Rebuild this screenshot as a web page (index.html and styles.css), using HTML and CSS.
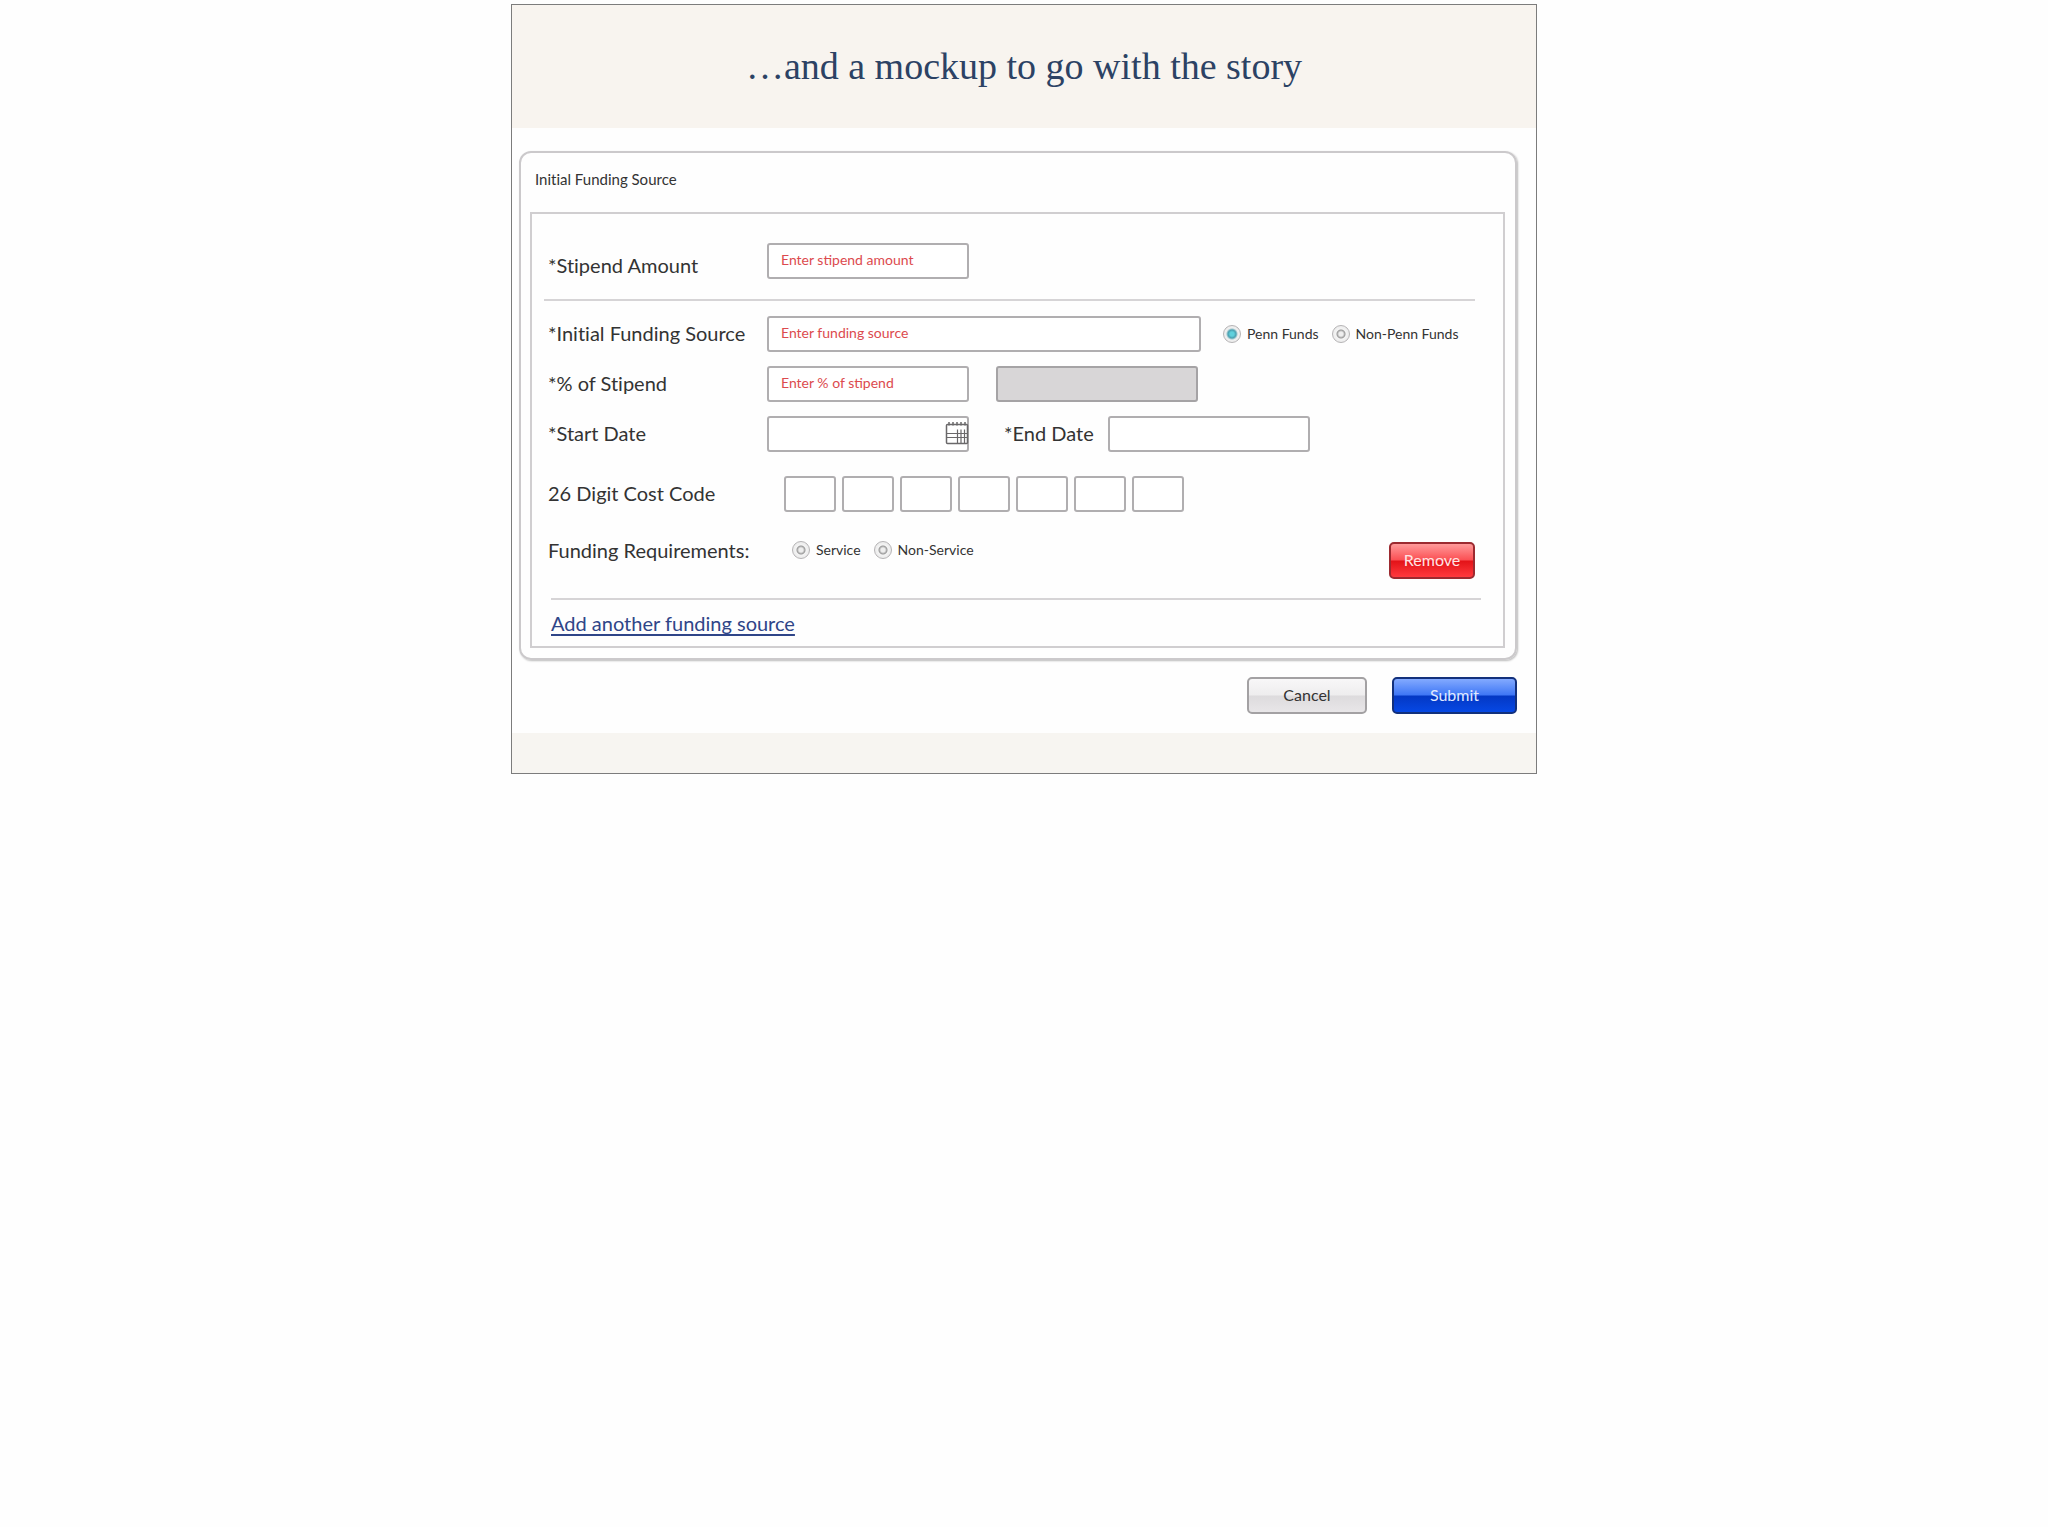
FILE: index.html
```html
<!DOCTYPE html>
<html lang="en">
<head>
    <meta charset="utf-8">
    <title>Initial Funding Source</title>
    <link rel="stylesheet" href="styles.css">
</head>
<body>
    <main class="slide">
        <header class="slide-header">
            <h1>…and a mockup to go with the story</h1>
        </header>

        <form class="funding-form">
            <section class="card">
                <h2>Initial Funding Source</h2>

                <div class="panel">
                    <div class="row row-stipend">
                        <label class="name" for="stipend">*Stipend Amount</label>
                        <input type="text" id="stipend" class="box" placeholder="Enter stipend amount">
                    </div>

                    <hr>

                    <div class="row">
                        <label class="name" for="source">*Initial Funding Source</label>
                        <input type="text" id="source" class="box wide" placeholder="Enter funding source">
                        <div class="options funds">
                            <label><input type="radio" name="funds" checked>Penn Funds</label>
                            <label><input type="radio" name="funds">Non-Penn Funds</label>
                        </div>
                    </div>

                    <div class="row">
                        <label class="name" for="percent">*% of Stipend</label>
                        <input type="text" id="percent" class="box" placeholder="Enter % of stipend">
                        <input type="text" class="box amount" aria-label="Calculated amount" disabled>
                    </div>

                    <div class="row">
                        <label class="name" for="start">*Start Date</label>
                        <div class="date">
                            <input type="text" id="start" class="box">
                            <button type="button" class="calendar" aria-label="Pick a date">
                                <svg viewBox="0 0 24 24" width="24" height="24" fill="none" stroke="#6a686a">
                                    <rect x="1.5" y="3.5" width="21" height="19" rx="1" stroke-width="1.5"/>
                                    <path d="M1 12.5h22M1 16.5h22" stroke-width="1.2"/>
                                    <path d="M12.5 8.5v14M16 8.5v14M19.5 8.5v14" stroke-width="1.2"/>
                                    <path d="M4 1v3.5M8 1v3.5M12 1v3.5M16 1v3.5M20 1v3.5" stroke-width="1.5"/>
                                </svg>
                            </button>
                        </div>
                        <label class="end-name" for="end">*End Date</label>
                        <input type="text" id="end" class="box">
                    </div>

                    <div class="row row-code">
                        <label class="name" for="code1">26 Digit Cost Code</label>
                        <div class="code">
                            <input type="text" id="code1" class="box">
                            <input type="text" class="box" aria-label="Cost code part 2">
                            <input type="text" class="box" aria-label="Cost code part 3">
                            <input type="text" class="box" aria-label="Cost code part 4">
                            <input type="text" class="box" aria-label="Cost code part 5">
                            <input type="text" class="box" aria-label="Cost code part 6">
                            <input type="text" class="box" aria-label="Cost code part 7">
                        </div>
                    </div>

                    <div class="row row-requirements">
                        <span class="name">Funding Requirements:</span>
                        <div class="options service">
                            <label><input type="radio" name="service">Service</label>
                            <label><input type="radio" name="service">Non-Service</label>
                        </div>
                        <button type="button" class="button remove">Remove</button>
                    </div>

                    <hr class="last">

                    <a href="#" class="add">Add another funding source</a>
                </div>
            </section>

            <div class="actions">
                <button type="button" class="button cancel">Cancel</button>
                <button type="submit" class="button submit">Submit</button>
            </div>
        </form>

        <footer class="slide-footer"></footer>
    </main>
</body>
</html>
```
FILE: styles.css
```css
* {
    box-sizing: border-box;
}
body {
    margin: 0;
    padding: 4px;
    background-color: #fefefe;
    font-family: Lato, "Liberation Sans", sans-serif;
    font-size: 20px;
    font-variant-ligatures: none;
    color: #333;
}
.slide {
    max-width: 1026px;
    margin: 0 auto;
    border: 1px solid #7c7c7c;
}
.slide-header {
    padding: 37px 20px 38px;
    background-color: #f8f4ef;
    text-align: center;
}
.slide-footer {
    height: 40px;
    background-color: #f7f5f1;
}
h1 {
    margin: 0;
    font-family: "Palatino Linotype", Palatino, "Liberation Serif", serif;
    font-size: 38px;
    font-weight: normal;
    line-height: 48px;
    color: #2c4264;
}

/* card */
.funding-form {
    padding: 23px 19px 19px 7px;
}
.card {
    padding: 0 10px 10px 9px;
    border: 2px solid #cbc9cb;
    border-radius: 12px;
    box-shadow: 1px 1px 2px #bbb;
}
h2 {
    margin: 0;
    padding: 14px 5px 21px;
    font-size: 15px;
    font-weight: normal;
    line-height: 24px;
}
.panel {
    padding: 29px 22px 11px 16px;
    border: 2px solid #d0ced0;
}
hr {
    height: 2px;
    margin: 20px 6px 15px -4px;
    border: 0;
    background-color: #d6d4d6;
}
hr.last {
    margin: 19px 0 11px 3px;
}

/* rows */
.row {
    display: flex;
    align-items: center;
    margin-bottom: 14px;
}
.row-stipend {
    align-items: flex-end;
    margin-bottom: 0;
}
.row-code {
    margin: 24px 0 20px;
}
.row-requirements {
    align-items: flex-start;
    height: 47px;
    margin-bottom: 0;
}
.name,
.end-name {
    flex: none;
    width: 219px;
    padding-bottom: 2px;
    line-height: 24px;
    white-space: nowrap;
}
.row-requirements .name,
.row-requirements .options {
    line-height: 36px;
}
.box {
    width: 202px;
    height: 36px;
    padding: 0 12px 3px;
    border: 2px solid #b0aeb0;
    border-radius: 3px;
    background-color: #fff;
    font-family: inherit;
    font-size: 14px;
    color: #333;
}
.box::placeholder {
    color: #dc4a4e;
    opacity: 1;
}
.wide {
    width: 434px;
}
.amount {
    margin-left: 27px;
    border-color: #a5a3a5;
    background-color: #d8d6d7;
}
.date {
    position: relative;
}
.date .box {
    display: block;
}
.calendar {
    position: absolute;
    top: 5px;
    right: 0;
    height: 24px;
    padding: 0;
    border: 0;
    background: none;
    cursor: pointer;
}
.end-name {
    width: 104px;
    margin-left: 35px;
}
.code {
    display: flex;
    gap: 6px;
    margin-left: 17px;
}
.code .box {
    width: 52px;
}

/* radios */
.options {
    display: flex;
    gap: 13px;
    font-size: 14px;
    line-height: 24px;
}
.options label {
    display: flex;
    align-items: center;
    gap: 6px;
    white-space: nowrap;
}
.funds {
    margin-left: 22px;
}
.service {
    margin-left: 25px;
}
.options input {
    appearance: none;
    width: 18px;
    height: 18px;
    margin: 0;
    border: 1px solid #b5b3b5;
    border-radius: 50%;
    background: radial-gradient(circle, #eee 2px, #999 4px, #f4f4f4 5px, #eee 7px);
}
.options input:checked {
    background: radial-gradient(circle, #5fd0dc 2px, #4a9fb0 4px, #eee 6px, #eee 7px);
}

/* buttons */
.button {
    height: 37px;
    padding: 0 0 3px;
    border: 2px solid;
    border-radius: 5px;
    font-family: inherit;
    font-size: 16px;
    cursor: pointer;
}
.remove {
    align-self: flex-end;
    width: 86px;
    margin-left: auto;
    margin-right: 6px;
    border-color: #9c2a30;
    background: linear-gradient(#ff9a9a, #fb5054 48%, #e31318 52%, #ff3a3e);
    color: #ffe4e4;
}
.cancel {
    width: 120px;
    border-color: #a3a1a3;
    background: linear-gradient(#f8f7f8, #eeedee 48%, #dddbdd 52%, #e8e6e8);
    color: #333;
}
.submit {
    width: 125px;
    border-color: #12307c;
    background: linear-gradient(#83aaff, #3f77f5 48%, #0438c4 52%, #0648e4);
    color: #e0eaff;
}
.add {
    display: block;
    width: fit-content;
    margin-left: 3px;
    line-height: 24px;
    color: #2f4588;
    text-underline-offset: 3px;
    text-decoration-thickness: 2px;
    text-decoration-skip-ink: none;
}
.actions {
    display: flex;
    justify-content: flex-end;
    gap: 25px;
    margin-top: 17px;
}
```
